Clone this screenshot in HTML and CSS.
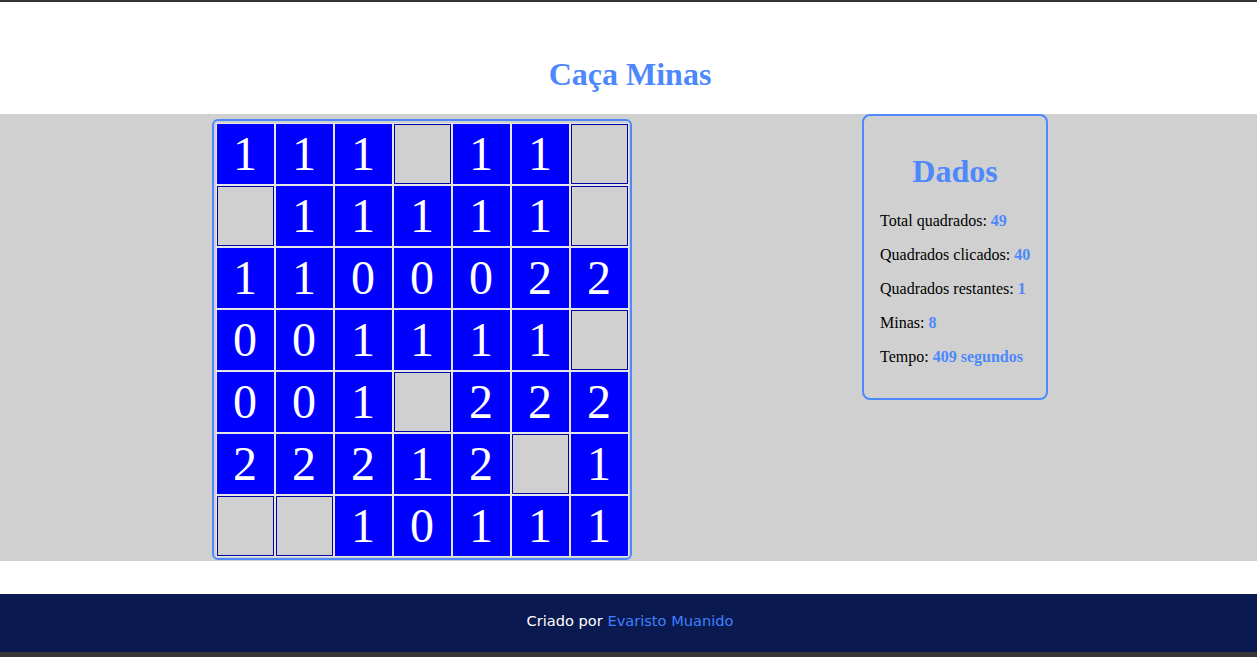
FILE: index.html
```html
<!DOCTYPE html>
<html lang="pt">
<head>
<meta charset="utf-8">
<title>Caça Minas</title>
<link rel="stylesheet" href="styles.css">
</head>
<body>
<div class="topbar"></div>
<header class="header">
  <h1 class="title">Caça Minas</h1>
</header>
<main class="game">
  <div class="board">
    <div class="cell open">1</div><div class="cell open">1</div><div class="cell open">1</div><div class="cell closed"></div><div class="cell open">1</div><div class="cell open">1</div><div class="cell closed"></div>
    <div class="cell closed"></div><div class="cell open">1</div><div class="cell open">1</div><div class="cell open">1</div><div class="cell open">1</div><div class="cell open">1</div><div class="cell closed"></div>
    <div class="cell open">1</div><div class="cell open">1</div><div class="cell open">0</div><div class="cell open">0</div><div class="cell open">0</div><div class="cell open">2</div><div class="cell open">2</div>
    <div class="cell open">0</div><div class="cell open">0</div><div class="cell open">1</div><div class="cell open">1</div><div class="cell open">1</div><div class="cell open">1</div><div class="cell closed"></div>
    <div class="cell open">0</div><div class="cell open">0</div><div class="cell open">1</div><div class="cell closed"></div><div class="cell open">2</div><div class="cell open">2</div><div class="cell open">2</div>
    <div class="cell open">2</div><div class="cell open">2</div><div class="cell open">2</div><div class="cell open">1</div><div class="cell open">2</div><div class="cell closed"></div><div class="cell open">1</div>
    <div class="cell closed"></div><div class="cell closed"></div><div class="cell open">1</div><div class="cell open">0</div><div class="cell open">1</div><div class="cell open">1</div><div class="cell open">1</div>
  </div>
  <aside class="panel">
    <h2 class="panel-title">Dados</h2>
    <p class="stat">Total quadrados: <b class="value">49</b></p>
    <p class="stat">Quadrados clicados: <b class="value">40</b></p>
    <p class="stat">Quadrados restantes: <b class="value">1</b></p>
    <p class="stat">Minas: <b class="value">8</b></p>
    <p class="stat">Tempo: <b class="value">409 segundos</b></p>
  </aside>
</main>
<div class="spacer"></div>
<footer class="footer">
  <p class="credit">Criado por <a class="author" href="#">Evaristo Muanido</a></p>
</footer>
<div class="bottombar"></div>
</body>
</html>
```

FILE: styles.css
```css
html, body {
  margin: 0;
  padding: 0;
  background: #ffffff;
}
body {
  font-family: "Liberation Serif", "Times New Roman", serif;
  font-size: 16px;
  color: #000;
  height: 657px;
  overflow: hidden;
}
.topbar {
  height: 2px;
  background: #333333;
}
.header {
  height: 112px;
  box-sizing: border-box;
  padding-top: 33px;
  padding-left: 3px;
  text-align: center;
}
.title {
  margin: 21.44px 0 0 0;
  font-size: 32px;
  font-weight: bold;
  color: #4d88fc;
  line-height: normal;
}
.game {
  height: 447px;
  box-sizing: border-box;
  background: #d0d0d0;
  display: flex;
  align-items: flex-start;
  padding-left: 212px;
  gap: 230px;
}
.board {
  margin-top: 5px;
  border: 2px solid #4d88fc;
  border-radius: 6px;
  padding: 1.5px;
  display: grid;
  grid-template-columns: repeat(7, 59px);
  grid-template-rows: repeat(7, 62px);
}
.cell {
  border: 1px solid #e6e6e6;
  display: flex;
  align-items: center;
  justify-content: center;
  font-family: "Liberation Serif", "Times New Roman", serif;
  font-size: 48px;
  line-height: 1;
  color: #ffffff;
}
.open {
  background: #0000ff;
}
.closed {
  background: #d0d0d0;
  box-shadow: inset 0 0 0 1px #0000a8;
}
.panel {
  width: 150px;
  border: 2px solid #4d88fc;
  border-radius: 8px;
  padding: 16px;
}
.panel-title {
  margin: 21.44px 0;
  font-size: 32px;
  font-weight: bold;
  color: #4d88fc;
  text-align: center;
  line-height: normal;
}
.stat {
  margin: 16px 0;
  white-space: nowrap;
}
.value {
  color: #4d88fc;
  font-weight: bold;
}
.spacer {
  height: 33px;
}
.footer {
  height: 58px;
  box-sizing: border-box;
  background: #0a1a50;
  display: flex;
  align-items: center;
  justify-content: center;
  padding-bottom: 5px;
  padding-left: 3px;
}
.credit {
  margin: 0;
  font-family: "DejaVu Sans", Verdana, sans-serif;
  font-size: 14.6px;
  color: #ffffff;
}
.author {
  color: #3f80ff;
  text-decoration: none;
}
.bottombar {
  height: 5px;
  background: #353535;
}
```
